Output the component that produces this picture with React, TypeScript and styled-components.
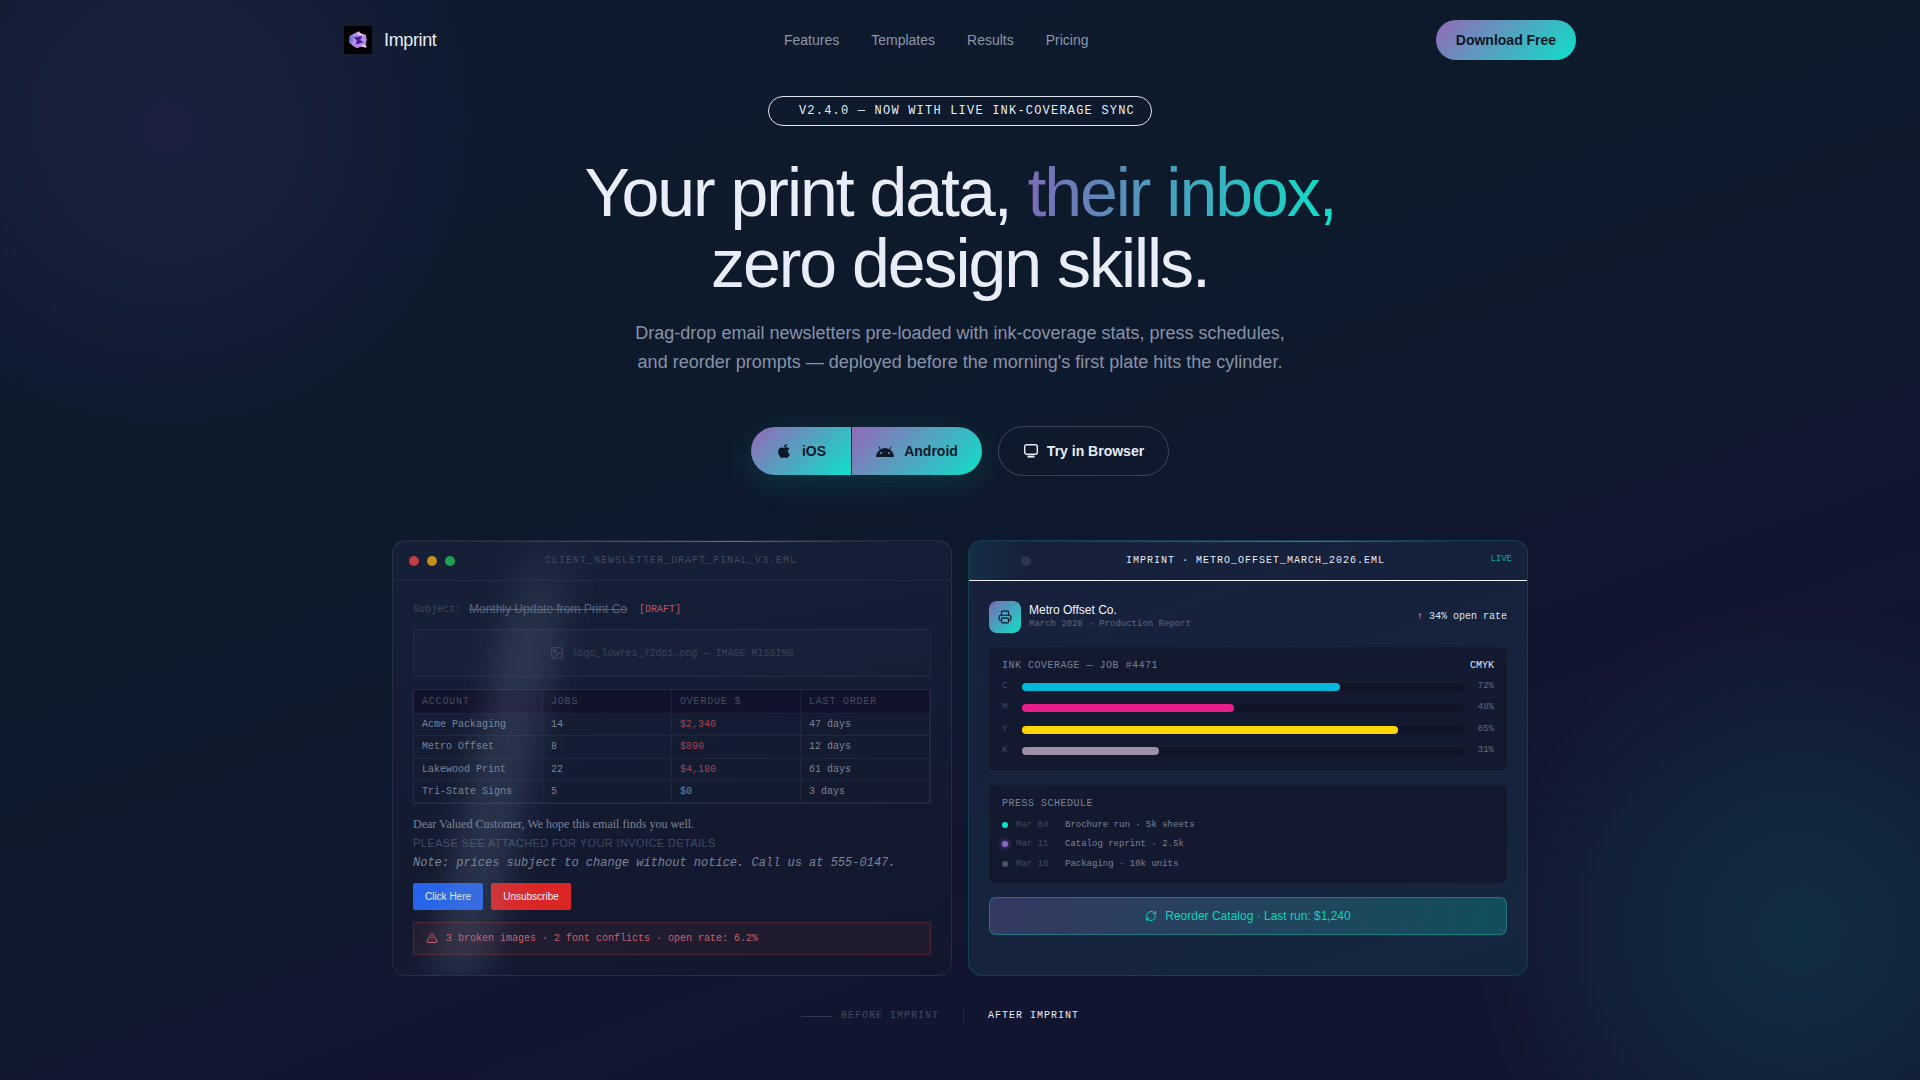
import React from 'react';
import styled, { createGlobalStyle } from 'styled-components';
import { Printer, RefreshCw, TriangleAlert, Image as ImageIcon } from 'lucide-react';
import { FaApple } from 'react-icons/fa';

const MONO = `"Liberation Mono", monospace`;
const SANS = `"Liberation Sans", Arial, sans-serif`;
const GRAD = `linear-gradient(135deg, #9568b8, #0de0c8)`;

const GlobalStyle = createGlobalStyle`
  html, body {
    margin: 0;
    padding: 0;
    background: #0e1a2e;
  }
  * { box-sizing: border-box; }
`;

const Page = styled.div`
  position: relative;
  width: 1920px;
  height: 1080px;
  overflow: hidden;
  font-family: ${SANS};
  color: #e8edf8;
  background:
    radial-gradient(
      circle 310px at 170px 130px,
      rgba(110, 70, 170, 0.13) 0%,
      rgba(110, 70, 170, 0.09) 45%,
      transparent 100%
    ),
    radial-gradient(
      circle 330px at 1800px 930px,
      rgba(13, 224, 200, 0.12) 0%,
      rgba(13, 224, 200, 0.08) 40%,
      transparent 100%
    ),
    linear-gradient(160deg, #0e1b2e 0%, #0d1a2c 40%, #12152f 75%);
`;

const Nav = styled.nav`
  display: flex;
  align-items: center;
  justify-content: space-between;
  width: 1232px;
  height: 80px;
  margin: 0 auto;
`;

const Brand = styled.div`
  display: flex;
  align-items: center;
  gap: 12px;
  font-size: 18px;
  letter-spacing: -0.36px;
`;

const LogoBox = styled.div`
  display: flex;
  align-items: center;
  justify-content: center;
  width: 28px;
  height: 28px;
  background: #000;
`;

const NavLinks = styled.div`
  display: flex;
  gap: 32px;
`;

const NavLink = styled.a`
  font-size: 14px;
  color: #8b96ab;
`;

const DownloadButton = styled.button`
  width: 140px;
  height: 40px;
  border: 0;
  border-radius: 20px;
  background: ${GRAD};
  color: #0d1829;
  font: bold 14px ${SANS};
`;

const Hero = styled.section`
  display: flex;
  flex-direction: column;
  align-items: center;
`;

const Badge = styled.div`
  margin-top: 16px;
  padding: 7px 16px 7px 30px;
  border: 1px solid #dfe5f0;
  border-radius: 15px;
  font: 12px/14px ${MONO};
  letter-spacing: 1.2px;
  color: #e6ebf5;
`;

const Title = styled.h1`
  margin: 31px 0 0;
  font-size: 68px;
  font-weight: 400;
  line-height: 1.05;
  letter-spacing: -2.04px;
  text-align: center;
  color: #e8edf8;
`;

const GradientText = styled.span`
  background: linear-gradient(90deg, #7b6bb5, #0de0c8);
  -webkit-background-clip: text;
  background-clip: text;
  color: transparent;
`;

const Subtitle = styled.p`
  margin: 19px 0 0;
  font-size: 18px;
  line-height: 1.65;
  text-align: center;
  color: #8892a8;
`;

const Actions = styled.div`
  display: flex;
  align-items: center;
  gap: 16px;
  margin-top: 48px;
`;

const StoreGroup = styled.div`
  display: flex;
  gap: 1px;
  border-radius: 24px;
  overflow: hidden;
  box-shadow: 0 8px 32px rgba(13, 224, 200, 0.14);
`;

const StoreButton = styled.button<{ $w: number }>`
  display: flex;
  align-items: center;
  justify-content: center;
  gap: 10px;
  width: ${(p) => p.$w}px;
  height: 48px;
  border: 0;
  background: ${GRAD};
  color: #0d1829;
  font: bold 14px ${SANS};
`;

const BrowserButton = styled.button`
  display: flex;
  align-items: center;
  justify-content: center;
  gap: 8px;
  width: 171px;
  height: 50px;
  border: 1px solid rgba(255, 255, 255, 0.18);
  border-radius: 25px;
  background: transparent;
  color: #e8edf8;
  font: bold 14px ${SANS};
`;

const Panels = styled.div`
  display: flex;
  gap: 16px;
  width: 1136px;
  margin: 64px auto 0;
`;

const Panel = styled.article<{ $after?: boolean }>`
  position: relative;
  width: 560px;
  height: 436px;
  border: 1px solid ${(p) => (p.$after ? 'rgba(13,224,200,0.14)' : 'rgba(255,255,255,0.08)')};
  border-radius: 14px;
  overflow: hidden;
  background: ${(p) =>
    p.$after
      ? 'linear-gradient(160deg, #17203b, #14263d)'
      : 'linear-gradient(170deg, #152036, #12172d)'};

  &::before {
    content: '';
    position: absolute;
    top: 0;
    left: 0;
    right: 0;
    height: 1px;
    background: linear-gradient(90deg, transparent 5%, #7b6bb5 45%, #0de0c8 62%, transparent 88%);
    opacity: 0.6;
  }
`;

const Streak = styled.div`
  position: absolute;
  top: -10px;
  bottom: -20px;
  left: 80px;
  width: 60px;
  background: linear-gradient(
    180deg,
    transparent,
    rgba(125, 145, 175, 0.19) 22%,
    rgba(125, 145, 175, 0.2) 92%,
    transparent
  );
  filter: blur(14px);
  transform: skewX(-12deg);
  pointer-events: none;
`;

const PanelHeader = styled.header<{ $after?: boolean }>`
  position: relative;
  display: flex;
  align-items: center;
  height: 40px;
  padding: 0 16px;
  gap: 8px;
  border-bottom: 1px solid ${(p) => (p.$after ? '#f0f4ff' : 'rgba(255,255,255,0.06)')};
  background: ${(p) =>
    p.$after ? 'linear-gradient(90deg, rgba(13,224,200,0.07), transparent 10%)' : 'none'};
`;

const Dot = styled.span<{ $c: string }>`
  width: 10px;
  height: 10px;
  border-radius: 50%;
  background: ${(p) => p.$c};
`;

const FileName = styled.span<{ $after?: boolean }>`
  position: absolute;
  left: ${(p) => (p.$after ? '15px' : '-2px')};
  right: 0;
  text-align: center;
  font: 10px ${MONO};
  letter-spacing: 1px;
  color: ${(p) => (p.$after ? '#e6ebf5' : '#3f4a60')};
`;

const Live = styled.span`
  position: absolute;
  top: 13px;
  right: 15px;
  font: 9px ${MONO};
  color: #0fa99a;
`;

const PanelBody = styled.div<{ $after?: boolean }>`
  display: flex;
  flex-direction: column;
  padding: ${(p) => (p.$after ? '20px' : '18px 20px 20px')};
`;

const SubjectRow = styled.div`
  display: flex;
  align-items: center;
  gap: 8px;
  height: 20px;
`;

const SubjectLabel = styled.span`
  font: 10px ${MONO};
  color: #3f4a60;
`;

const SubjectText = styled.span`
  font-size: 12px;
  color: #5a6478;
  text-decoration: line-through;
`;

const DraftTag = styled.span`
  margin-left: 4px;
  font: 10px ${MONO};
  color: #bd5562;
`;

const MissingImage = styled.div`
  display: flex;
  align-items: center;
  justify-content: center;
  gap: 7px;
  height: 48px;
  margin-top: 10px;
  border: 1px solid rgba(255, 255, 255, 0.05);
  border-radius: 2px;
  background: rgba(255, 255, 255, 0.015);
  font: 10px ${MONO};
  color: #394358;
`;

const LegacyTable = styled.div`
  display: grid;
  grid-template-columns: repeat(4, 1fr);
  margin-top: 12px;
  border: 1px solid rgba(255, 255, 255, 0.07);
`;

const HeadCell = styled.div`
  height: 24px;
  padding: 0 8px;
  background: #12132a;
  border-right: 1px solid rgba(255, 255, 255, 0.05);
  border-bottom: 1px solid rgba(255, 255, 255, 0.05);
  font: 10px/23px ${MONO};
  letter-spacing: 0.8px;
  color: #434c62;
`;

const Cell = styled.div<{ $red?: boolean }>`
  height: 22.25px;
  padding: 0 8px;
  border-right: 1px solid rgba(255, 255, 255, 0.05);
  border-bottom: 1px solid rgba(255, 255, 255, 0.05);
  font: 10px/21px ${MONO};
  color: ${(p) => (p.$red ? '#a8414f' : '#7a8396')};
`;

const Greeting = styled.p`
  margin: 13px 0 0;
  font: 12px/15px "Liberation Serif", serif;
  color: #7a8396;
`;

const Shouting = styled.p`
  margin: 4px 0 0;
  font: 11px/14px ${SANS};
  letter-spacing: 0.4px;
  color: #3f4a60;
`;

const Note = styled.p`
  margin: 6px 0 0;
  font: italic 12px/14px ${MONO};
  color: #7a8396;
`;

const LegacyButtons = styled.div`
  display: flex;
  gap: 8px;
  margin-top: 13px;
`;

const LegacyButton = styled.button<{ $bg: string; $w: number }>`
  width: ${(p) => p.$w}px;
  height: 27px;
  border: 0;
  border-radius: 2px;
  background: ${(p) => p.$bg};
  color: #f0f4ff;
  font: 10px ${SANS};
`;

const ErrorBar = styled.div`
  display: flex;
  align-items: center;
  gap: 8px;
  height: 33px;
  margin-top: 12px;
  padding: 0 12px;
  border: 1px solid rgba(220, 60, 70, 0.25);
  border-radius: 3px;
  background: rgba(200, 60, 70, 0.08);
  font: 10px ${MONO};
  color: #c9616c;

  svg {
    margin-bottom: 2px;
  }
`;

const ClientRow = styled.div`
  display: flex;
  align-items: center;
  justify-content: space-between;
`;

const ClientInfo = styled.div`
  display: flex;
  align-items: center;
  gap: 8px;
`;

const ClientIcon = styled.div`
  display: flex;
  align-items: center;
  justify-content: center;
  width: 32px;
  height: 32px;
  border-radius: 8px;
  background: linear-gradient(135deg, #7b6bb5, #0de0c8);
  color: #0d1829;
`;

const ClientText = styled.div`
  padding-bottom: 2px;
`;

const ClientName = styled.div`
  font-size: 12px;
  line-height: 14px;
  color: #f0f4ff;
`;

const ClientSub = styled.div`
  margin-top: 1px;
  font: 9px/12px ${MONO};
  color: #5f6a80;
`;

const OpenRate = styled.span`
  padding-bottom: 2px;
  font: 10px ${MONO};
  color: #dbe2ee;
`;

const InkCard = styled.div`
  margin-top: 14px;
  padding: 12px 13px 8px;
  border-radius: 6px;
  background: #13192f;
`;

const ScheduleCard = styled.div`
  margin-top: 15px;
  padding: 12px 13px 9px;
  border-radius: 6px;
  background: #13192f;
`;

const CardTitleRow = styled.div`
  display: flex;
  justify-content: space-between;
  font: 10px/14px ${MONO};
  letter-spacing: 0.5px;
  color: #7a8396;
`;

const CardStrong = styled.span`
  letter-spacing: 0;
  color: #e6ebf5;
`;

const InkRows = styled.div`
  margin-top: 3px;
`;

const InkRow = styled.div`
  display: flex;
  align-items: center;
  height: 21.5px;
`;

const InkLabel = styled.span`
  width: 20px;
  margin-bottom: 2px;
  font: 9px ${MONO};
  color: #3f4a60;
`;

const InkTrack = styled.div`
  flex: 1;
  height: 8px;
  border-radius: 4px;
  background: #101427;
`;

const InkFill = styled.div<{ $c: string }>`
  height: 100%;
  border-radius: 4px;
  background: ${(p) => p.$c};
`;

const InkValue = styled.span`
  width: 30px;
  margin-bottom: 2px;
  text-align: right;
  font: 9px ${MONO};
  color: #5f6a80;
`;

const ScheduleRows = styled.div`
  margin-top: 4px;
`;

const ScheduleRow = styled.div`
  display: flex;
  align-items: center;
  gap: 8px;
  height: 19.5px;
  font: 9px ${MONO};
  color: #7a8396;
`;

const ScheduleDot = styled.span<{ $c: string; $glow?: boolean }>`
  width: 6px;
  height: 6px;
  border-radius: 50%;
  background: ${(p) => p.$c};
  box-shadow: ${(p) => (p.$glow ? `0 0 5px ${p.$c}` : 'none')};
`;

const ScheduleDate = styled.span`
  width: 41px;
  color: #3f4a60;
`;

const ReorderButton = styled.button`
  display: flex;
  align-items: center;
  justify-content: center;
  gap: 8px;
  height: 38px;
  margin-top: 14px;
  border: 1px solid rgba(13, 224, 200, 0.35);
  border-radius: 7px;
  background: linear-gradient(90deg, rgba(123, 107, 181, 0.3), rgba(13, 224, 200, 0.22));
  color: #0ed2bd;
  font: 12px ${SANS};
`;

const Footer = styled.footer`
  display: flex;
  align-items: center;
  justify-content: center;
  gap: 24px;
  margin-top: 33px;
  font: 10px/14px ${MONO};
  letter-spacing: 1px;
`;

const Before = styled.span`
  display: flex;
  align-items: center;
  gap: 8px;
  color: #3f4a60;

  &::before {
    content: '';
    width: 32px;
    height: 1px;
    background: #2a344a;
  }
`;

const Divider = styled.span`
  width: 1px;
  height: 14px;
  background: #232c42;
`;

const After = styled.span`
  display: flex;
  align-items: center;
  gap: 8px;
  color: #e6ebf5;

  &::after {
    content: '';
    width: 32px;
    height: 1px;
    background: transparent;
  }
`;

const LogoMark = () => (
  <svg width="22" height="22" viewBox="0 0 20 20">
    <path d="M3 6 L8 3.5 L11 2 L13 4.5 L17 5 L18 10 L17 13 L18 17 L13 16 L9 17.5 L5 15 L2 12 Z" fill="#b98be6" />
    <path d="M2 7 L6 5 L5 12 L3.5 14 Z" fill="#6f7fd4" />
    <path d="M6 7.5 L14 6.5 L12 10 L15 12 L8 14 L9 10.5 Z" fill="#43209a" />
    <path d="M9 3 L13 4 L16 6 L11 5.5 Z M12 15.5 L16 14 L17 17 Z" fill="#f0d4f4" />
  </svg>
);

const AndroidHead = () => (
  <svg width="18" height="12" viewBox="0 0 18 12" fill="currentColor">
    <path
      fillRule="evenodd"
      d="M0 12 A9 9 0 0 1 18 12 Z M5 7 a1 1 0 1 0 .01 0 Z M13 7 a1 1 0 1 0 .01 0 Z"
    />
    <path d="M4.2 4.6 L3 1.6" stroke="currentColor" strokeWidth="1" />
    <path d="M13.8 4.6 L15 1.6" stroke="currentColor" strokeWidth="1" />
  </svg>
);

const BrowserIcon = () => (
  <svg width="16" height="16" viewBox="0 0 16 16" fill="none" stroke="currentColor" strokeWidth="1.4">
    <rect x="1.7" y="1.7" width="12.6" height="9.6" rx="2" />
    <path d="M4.5 13.6 H11.5" strokeWidth="2" />
  </svg>
);

const inks = [
  { l: 'C', v: 72, c: '#00b8d9' },
  { l: 'M', v: 48, c: '#e91e8c' },
  { l: 'Y', v: 85, c: '#ffd600' },
  { l: 'K', v: 31, c: '#9a8fa8' },
];

const rows = [
  ['Acme Packaging', '14', '$2,340', '47 days'],
  ['Metro Offset', '8', '$890', '12 days'],
  ['Lakewood Print', '22', '$4,180', '61 days'],
  ['Tri-State Signs', '5', '$0', '3 days'],
];

const schedule = [
  { d: 'Mar 04', t: 'Brochure run · 5k sheets', c: '#0de0c8', g: false },
  { d: 'Mar 11', t: 'Catalog reprint · 2.5k', c: '#8a66c0', g: true },
  { d: 'Mar 18', t: 'Packaging · 10k units', c: '#4d5568', g: false },
];

export default function App() {
  return (
    <Page>
      <GlobalStyle />
      <Nav>
        <Brand>
          <LogoBox>
            <LogoMark />
          </LogoBox>
          Imprint
        </Brand>
        <NavLinks>
          <NavLink>Features</NavLink>
          <NavLink>Templates</NavLink>
          <NavLink>Results</NavLink>
          <NavLink>Pricing</NavLink>
        </NavLinks>
        <DownloadButton>Download Free</DownloadButton>
      </Nav>

      <Hero>
        <Badge>V2.4.0 — NOW WITH LIVE INK-COVERAGE SYNC</Badge>
        <Title>
          Your print data, <GradientText>their inbox,</GradientText>
          <br />
          zero design skills.
        </Title>
        <Subtitle>
          Drag-drop email newsletters pre-loaded with ink-coverage stats, press schedules,
          <br />
          and reorder prompts — deployed before the morning's first plate hits the cylinder.
        </Subtitle>
        <Actions>
          <StoreGroup>
            <StoreButton $w={100}>
              <FaApple size={16} /> iOS
            </StoreButton>
            <StoreButton $w={130}>
              <AndroidHead /> Android
            </StoreButton>
          </StoreGroup>
          <BrowserButton>
            <BrowserIcon /> Try in Browser
          </BrowserButton>
        </Actions>
      </Hero>

      <Panels>
        <Panel>
          <Streak />
          <PanelHeader>
            <Dot $c="#c23d45" />
            <Dot $c="#c48f1a" />
            <Dot $c="#1fa055" />
            <FileName>CLIENT_NEWSLETTER_DRAFT_FINAL_V3.EML</FileName>
          </PanelHeader>
          <PanelBody>
            <SubjectRow>
              <SubjectLabel>Subject:</SubjectLabel>
              <SubjectText>Monthly Update from Print Co</SubjectText>
              <DraftTag>[DRAFT]</DraftTag>
            </SubjectRow>
            <MissingImage>
              <ImageIcon size={14} /> logo_lowres_72dpi.png — IMAGE MISSING
            </MissingImage>
            <LegacyTable>
              {['ACCOUNT', 'JOBS', 'OVERDUE $', 'LAST ORDER'].map((h) => (
                <HeadCell key={h}>{h}</HeadCell>
              ))}
              {rows.map((r) =>
                r.map((c, i) => (
                  <Cell key={r[0] + i} $red={i === 2 && c !== '$0'}>
                    {c}
                  </Cell>
                )),
              )}
            </LegacyTable>
            <Greeting>Dear Valued Customer, We hope this email finds you well.</Greeting>
            <Shouting>PLEASE SEE ATTACHED FOR YOUR INVOICE DETAILS</Shouting>
            <Note>Note: prices subject to change without notice. Call us at 555-0147.</Note>
            <LegacyButtons>
              <LegacyButton $bg="#2563eb" $w={70}>Click Here</LegacyButton>
              <LegacyButton $bg="#dc2626" $w={80}>Unsubscribe</LegacyButton>
            </LegacyButtons>
            <ErrorBar>
              <TriangleAlert size={12} /> 3 broken images · 2 font conflicts · open rate: 6.2%
            </ErrorBar>
          </PanelBody>
        </Panel>

        <Panel $after>
          <PanelHeader $after>
            <Dot $c="transparent" />
            <Dot $c="transparent" />
            <Dot $c="#2a3450" />
            <FileName $after>IMPRINT · METRO_OFFSET_MARCH_2026.EML</FileName>
            <Live>LIVE</Live>
          </PanelHeader>
          <PanelBody $after>
            <ClientRow>
              <ClientInfo>
                <ClientIcon>
                  <Printer size={14} />
                </ClientIcon>
                <ClientText>
                  <ClientName>Metro Offset Co.</ClientName>
                  <ClientSub>March 2026 · Production Report</ClientSub>
                </ClientText>
              </ClientInfo>
              <OpenRate>↑ 34% open rate</OpenRate>
            </ClientRow>
            <InkCard>
              <CardTitleRow>
                <span>INK COVERAGE — JOB #4471</span>
                <CardStrong>CMYK</CardStrong>
              </CardTitleRow>
              <InkRows>
                {inks.map((k) => (
                  <InkRow key={k.l}>
                    <InkLabel>{k.l}</InkLabel>
                    <InkTrack>
                      <InkFill $c={k.c} style={{ width: `${k.v}%` }} />
                    </InkTrack>
                    <InkValue>{k.v}%</InkValue>
                  </InkRow>
                ))}
              </InkRows>
            </InkCard>
            <ScheduleCard>
              <CardTitleRow>PRESS SCHEDULE</CardTitleRow>
              <ScheduleRows>
                {schedule.map((s) => (
                  <ScheduleRow key={s.d}>
                    <ScheduleDot $c={s.c} $glow={s.g} />
                    <ScheduleDate>{s.d}</ScheduleDate>
                    {s.t}
                  </ScheduleRow>
                ))}
              </ScheduleRows>
            </ScheduleCard>
            <ReorderButton>
              <RefreshCw size={12} /> Reorder Catalog · Last run: $1,240
            </ReorderButton>
          </PanelBody>
        </Panel>
      </Panels>

      <Footer>
        <Before>BEFORE IMPRINT</Before>
        <Divider />
        <After>AFTER IMPRINT</After>
      </Footer>
    </Page>
  );
}
